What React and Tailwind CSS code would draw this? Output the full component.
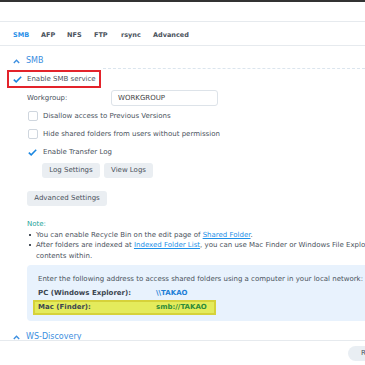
import React from 'react';

const Check = () => (
  <svg width="9" height="7" viewBox="0 0 9 7" className="shrink-0">
    <polyline points="0.8,3.6 3.2,5.9 8.2,0.8" fill="none" stroke="#1a86e0" strokeWidth="1.5" />
  </svg>
);

const Box = () => <div className="w-[10px] h-[10px] shrink-0 rounded-[2px] border border-[#cfd6de] bg-white" />;

const Chevron = () => (
  <svg width="7" height="5" viewBox="0 0 7 5" className="shrink-0">
    <polyline points="0.8,4 3.5,1.2 6.2,4" fill="none" stroke="#3b8ee0" strokeWidth="1.3" />
  </svg>
);

const tabs = [
  { label: 'SMB', w: 'w-[28px]', active: true },
  { label: 'AFP', w: 'w-[26px]' },
  { label: 'NFS', w: 'w-[27px]' },
  { label: 'FTP', w: 'w-[27px]' },
  { label: 'rsync', w: 'w-[32px]' },
  { label: 'Advanced', w: 'w-[50px]' },
];

export default function App() {
  return (
    <div className="w-[365px] h-[365px] overflow-hidden bg-white font-['DejaVu_Sans',sans-serif] text-[7px] text-[#4a525c] whitespace-nowrap">
      <div className="h-[2px] bg-[#333]" />
      <div className="h-[19px]" />

      {/* tab bar */}
      <div className="h-[25px] border-y border-[#e6eaee] flex items-center pl-[13px] pt-[4px]">
        {tabs.map(t => (
          <div key={t.label} className={`${t.w} shrink-0 font-bold text-[6.5px] ${t.active ? 'text-[#2a8fe8]' : 'text-[#4a525c]'}`}>
            {t.label}
          </div>
        ))}
      </div>

      {/* scroll area */}
      <div className="h-[294px] overflow-hidden">
        <div className="mt-[7px] h-[16px] flex items-center pl-[13px]">
          <Chevron />
          <span className="ml-[6px] text-[8px] text-[#3b8ee0]">SMB</span>
          <div className="flex-1 ml-[60px] self-end border-b border-dashed border-[#dbe5ee]" />
        </div>

        <div className="ml-[7px] mt-[1px] w-[94px] h-[18px] border-2 border-[#e3232b] flex items-center pl-[4px] pt-[1px]">
          <Check />
          <span className="ml-[5px]">Enable SMB service</span>
        </div>

        <div className="mt-[2px] h-[16px] flex items-center pl-[27px]">
          <span className="w-[84px]">Workgroup:</span>
          <div className="w-[107px] h-[16px] border border-[#dde3e9] rounded-[3px] flex items-center pl-[6px] text-[#444]">WORKGROUP</div>
        </div>

        <div className="mt-[1px] h-[18px] flex items-center pl-[28px]">
          <Box />
          <span className="ml-[5px]">Disallow access to Previous Versions</span>
        </div>
        <div className="h-[18px] flex items-center pl-[28px]">
          <Box />
          <span className="ml-[5px]">Hide shared folders from users without permission</span>
        </div>
        <div className="h-[18px] flex items-center pl-[28px]">
          <Check />
          <span className="ml-[6px]">Enable Transfer Log</span>
        </div>

        <div className="mt-[2px] flex gap-[4px] pl-[42px]">
          <div className="w-[58px] h-[15px] rounded-[3px] bg-[#eaeef2] flex items-center justify-center">Log Settings</div>
          <div className="w-[49px] h-[15px] rounded-[3px] bg-[#eaeef2] flex items-center justify-center">View Logs</div>
        </div>

        <div className="mt-[13px] pl-[27px]">
          <div className="w-[80px] h-[15px] rounded-[3px] bg-[#eaeef2] flex items-center justify-center">Advanced Settings</div>
        </div>

        <div className="mt-[13px] pl-[27px] leading-[10.5px]">
          <div className="text-[#25a59a]">Note:</div>
          <div className="flex items-center">
            <span className="w-[2px] h-[2px] shrink-0 bg-[#4a525c] ml-[2px] mr-[5px]" />
            <span>You can enable Recycle Bin on the edit page of <span className="text-[#1d8fe8] underline">Shared Folder</span>.</span>
          </div>
          <div className="flex items-center">
            <span className="w-[2px] h-[2px] shrink-0 bg-[#4a525c] ml-[2px] mr-[5px]" />
            <span>After folders are indexed at <span className="text-[#1d8fe8] underline">Indexed Folder List</span>, you can use Mac Finder or Windows File Explorer to search files and</span>
          </div>
          <div className="pl-[9px]">contents within.</div>
        </div>

        <div className="mt-[4px] ml-[27px] w-[400px] rounded-[4px] bg-[#e8f2fd] pl-[11px] pt-[7px] pb-[6px]">
          <div className="h-[14px] flex items-center">Enter the following address to access shared folders using a computer in your local network:</div>
          <div className="h-[14px] flex items-center font-bold">
            <span className="w-[118px] text-[#3c4650]">PC (Windows Explorer):</span>
            <span className="text-[#1d7fd6]">\\TAKAO</span>
          </div>
          <div className="-ml-[5px] w-[183px] h-[15px] border-2 border-[#d6d23a] bg-[#e4eb5c] pl-[3px] flex items-center font-bold">
            <span className="w-[118px] text-[#3c4650]">Mac (Finder):</span>
            <span className="text-[#2e8b3a]">smb://TAKAO</span>
          </div>
        </div>

        <div className="mt-[8px] h-[16px] flex items-center pl-[13px]">
          <Chevron />
          <span className="ml-[6px] text-[8px] text-[#3b8ee0]">WS-Discovery</span>
        </div>
      </div>

      {/* footer */}
      <div className="border-t border-[#e6eaee] pl-[348px] pt-[5px]">
        <div className="w-[50px] h-[15px] rounded-full bg-[#e9eef3] flex items-center pl-[13px] text-[#4a525c]">Reset</div>
      </div>
    </div>
  );
}
